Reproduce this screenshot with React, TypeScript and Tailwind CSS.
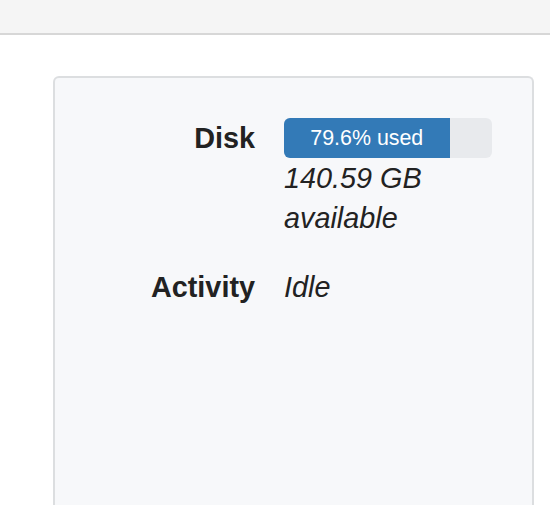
import React from 'react'

interface StatRow {
  label: string
  content: React.ReactNode
}

function UsageBar({ percent }: { percent: number }) {
  return (
    <div className="h-[40px] w-[208px] rounded-[6px] bg-[#e8eaed] overflow-hidden flex">
      <div
        className="h-full bg-[#337ab7] text-white text-[21.4px] flex items-center justify-center"
        style={{ width: `${percent}%` }}
      >
        {percent}% used
      </div>
    </div>
  )
}

export default function App() {
  const rows: StatRow[] = [
    {
      label: 'Disk',
      content: (
        <div>
          <UsageBar percent={79.6} />
          <div className="italic">140.59 GB available</div>
        </div>
      ),
    },
    { label: 'Activity', content: <div className="italic">Idle</div> },
  ]

  return (
    <div
      className="h-[505px] bg-white text-[#222] overflow-hidden"
      style={{ fontFamily: '"Liberation Sans", Arial, sans-serif' }}
    >
      <div className="h-[35px] bg-[#f5f5f5] border-b-2 border-[#d7d7d7]" />
      {/* panel continues below the fold, so no bottom border */}
      <div className="ml-[53px] mt-[41px] w-[481px] h-[429px] border-2 border-b-0 border-[#dcdee0] rounded-t-[6px] bg-[#f7f8fa] pt-[40px]">
        <div className="grid grid-cols-[200px_208px] gap-x-[29px] gap-y-[29px] text-[28.8px] leading-[40px]">
          {rows.map((row) => (
            <React.Fragment key={row.label}>
              <div className="text-right font-bold">{row.label}</div>
              {row.content}
            </React.Fragment>
          ))}
        </div>
      </div>
    </div>
  )
}
